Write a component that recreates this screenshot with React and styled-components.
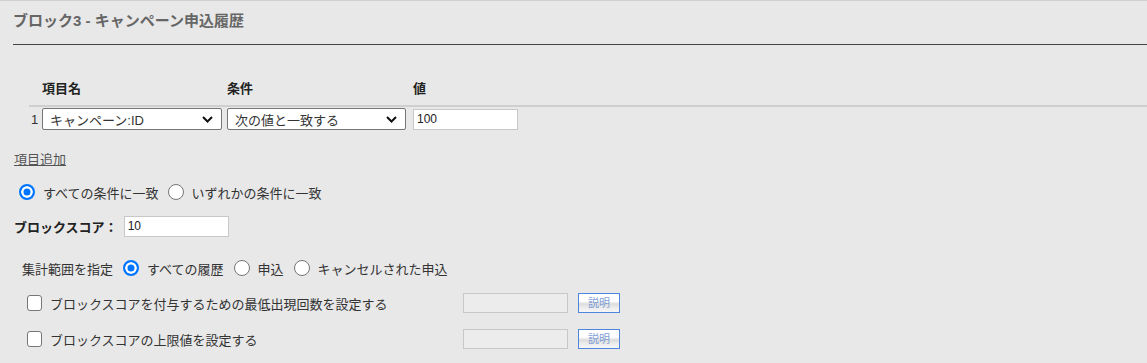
import React from 'react';
import styled, { createGlobalStyle } from 'styled-components';

const GlobalStyle = createGlobalStyle`
  html, body { margin: 0; padding: 0; background: #e8e8e8; }
  body {
    border-top: 1px solid #d0d0d0;
    font-family: "Liberation Sans", "Noto Sans CJK JP", sans-serif;
    font-size: 13px;
    color: #333;
    overflow: hidden;
  }
`;

const Page = styled.div`
  width: 1147px;
  height: 362px;
`;

const Title = styled.h2`
  margin: 0 0 0 13px;
  padding: 9px 0 12px;
  line-height: 22px;
  font-size: 15px;
  font-weight: bold;
  color: #666;
  border-bottom: 1px solid #444;
`;

const Conditions = styled.div`
  margin: 34px 0 0 29px;
`;

const GridRow = styled.div`
  display: grid;
  grid-template-columns: 13px 185px 186px 1fr;
  align-items: center;
`;

const HeaderRow = styled(GridRow)`
  line-height: 20px;
  padding-bottom: 6px;
  border-bottom: 2px solid #cfcfcf;
`;

const HeaderCell = styled.div`
  font-weight: bold;
  color: #222;
  font-size: 13px;
`;

const DataRow = styled(GridRow)`
  padding-top: 1px;
  height: 22px;
`;

const Index = styled.div`
  padding-left: 2px;
  color: #333;
`;

const SelectBox = styled.div`
  box-sizing: border-box;
  width: ${p => p.$w}px;
  height: 22px;
  background: #fff;
  border: 1px solid #767676;
  border-radius: 2px;
  display: flex;
  align-items: center;
  justify-content: space-between;
  padding: 0 8px 0 7px;
  color: #333;
  font-size: 13px;
`;

const TextInput = styled.div`
  box-sizing: border-box;
  width: 105px;
  height: ${p => p.$h || 21}px;
  background: ${p => (p.$disabled ? '#ececec' : '#fff')};
  border: 1px solid #c8c8c8;
  display: flex;
  align-items: center;
  padding-left: 3px;
  font-size: 12px;
  color: #222;
`;

const LinkRow = styled.div`
  margin: 18px 0 0 14px;
  height: 20px;
  display: flex;
  align-items: center;
`;

const Link = styled.a`
  color: #555;
  text-decoration: underline;
  font-size: 13px;
`;

const Row = styled.div`
  display: flex;
  align-items: center;
  height: 22px;
  margin-top: ${p => p.$mt}px;
  padding-left: ${p => p.$pl}px;
`;

const Radio = styled.input.attrs({ type: 'radio' })`
  appearance: none;
  box-sizing: border-box;
  flex: none;
  width: 16px;
  height: 16px;
  margin: 0 0 0 ${p => p.$ml || 0}px;
  border-radius: 50%;
  border: 1px solid #767676;
  background: #fff;
  &:checked {
    border: 2px solid #0075ff;
    background: #0075ff;
    box-shadow: inset 0 0 0 2.5px #fff;
  }
`;

const Checkbox = styled.input.attrs({ type: 'checkbox' })`
  appearance: none;
  box-sizing: border-box;
  flex: none;
  width: 15px;
  height: 16px;
  margin: 0;
  border: 1px solid #767676;
  border-radius: 3px;
  background: #fff;
`;

const OptionLabel = styled.span`
  margin-left: 8px;
  color: #333;
  white-space: nowrap;
`;

const PlainText = styled.span`
  color: #333;
  white-space: nowrap;
`;

const BoldLabel = styled.span`
  font-weight: bold;
  color: #222;
  margin-right: 6px;
  white-space: nowrap;
`;

const CheckLabel = styled.span`
  margin-left: 8px;
  width: 413px;
  flex: none;
  color: #333;
  white-space: nowrap;
`;

const HelpButton = styled.button`
  box-sizing: border-box;
  width: 42px;
  height: 20px;
  margin-left: 10px;
  padding: 0;
  border: 1px solid #4d86dc;
  background: linear-gradient(#ffffff 0%, #ffffff 40%, #dcdcdc 55%, #ececec 75%, #f6f6f6 100%);
  color: #7f9fd6;
  font-family: "Liberation Sans", "Noto Sans CJK JP", sans-serif;
  font-size: 11px;
  line-height: 18px;
`;

const Chevron = () => (
  <svg width="11" height="7" viewBox="0 0 11 7" aria-hidden="true">
    <path d="M1 1 L5.5 5.5 L10 1" fill="none" stroke="#111" strokeWidth="2" />
  </svg>
);

export default function App() {
  return (
    <Page>
      <GlobalStyle />
      <Title>ブロック3 - キャンペーン申込履歴</Title>

      <Conditions>
        <HeaderRow>
          <div />
          <HeaderCell>項目名</HeaderCell>
          <HeaderCell>条件</HeaderCell>
          <HeaderCell>値</HeaderCell>
        </HeaderRow>
        <DataRow>
          <Index>1</Index>
          <SelectBox $w={180}>
            <span>キャンペーン:ID</span>
            <Chevron />
          </SelectBox>
          <SelectBox $w={179}>
            <span>次の値と一致する</span>
            <Chevron />
          </SelectBox>
          <TextInput>100</TextInput>
        </DataRow>
      </Conditions>

      <LinkRow>
        <Link>項目追加</Link>
      </LinkRow>

      <Row $mt={13} $pl={14}>
        <Radio name="match" defaultChecked $ml={5} />
        <OptionLabel>すべての条件に一致</OptionLabel>
        <Radio name="match" $ml={9} />
        <OptionLabel>いずれかの条件に一致</OptionLabel>
      </Row>

      <Row $mt={12} $pl={14}>
        <BoldLabel>ブロックスコア：</BoldLabel>
        <TextInput>10</TextInput>
      </Row>

      <Row $mt={20} $pl={22}>
        <PlainText>集計範囲を指定</PlainText>
        <Radio name="range" defaultChecked $ml={10} />
        <OptionLabel>すべての履歴</OptionLabel>
        <Radio name="range" $ml={10} />
        <OptionLabel>申込</OptionLabel>
        <Radio name="range" $ml={10} />
        <OptionLabel>キャンセルされた申込</OptionLabel>
      </Row>

      <Row $mt={13} $pl={27}>
        <Checkbox />
        <CheckLabel>ブロックスコアを付与するための最低出現回数を設定する</CheckLabel>
        <TextInput $disabled $h={20} />
        <HelpButton>説明</HelpButton>
      </Row>

      <Row $mt={14} $pl={27}>
        <Checkbox />
        <CheckLabel>ブロックスコアの上限値を設定する</CheckLabel>
        <TextInput $disabled $h={20} />
        <HelpButton>説明</HelpButton>
      </Row>
    </Page>
  );
}
